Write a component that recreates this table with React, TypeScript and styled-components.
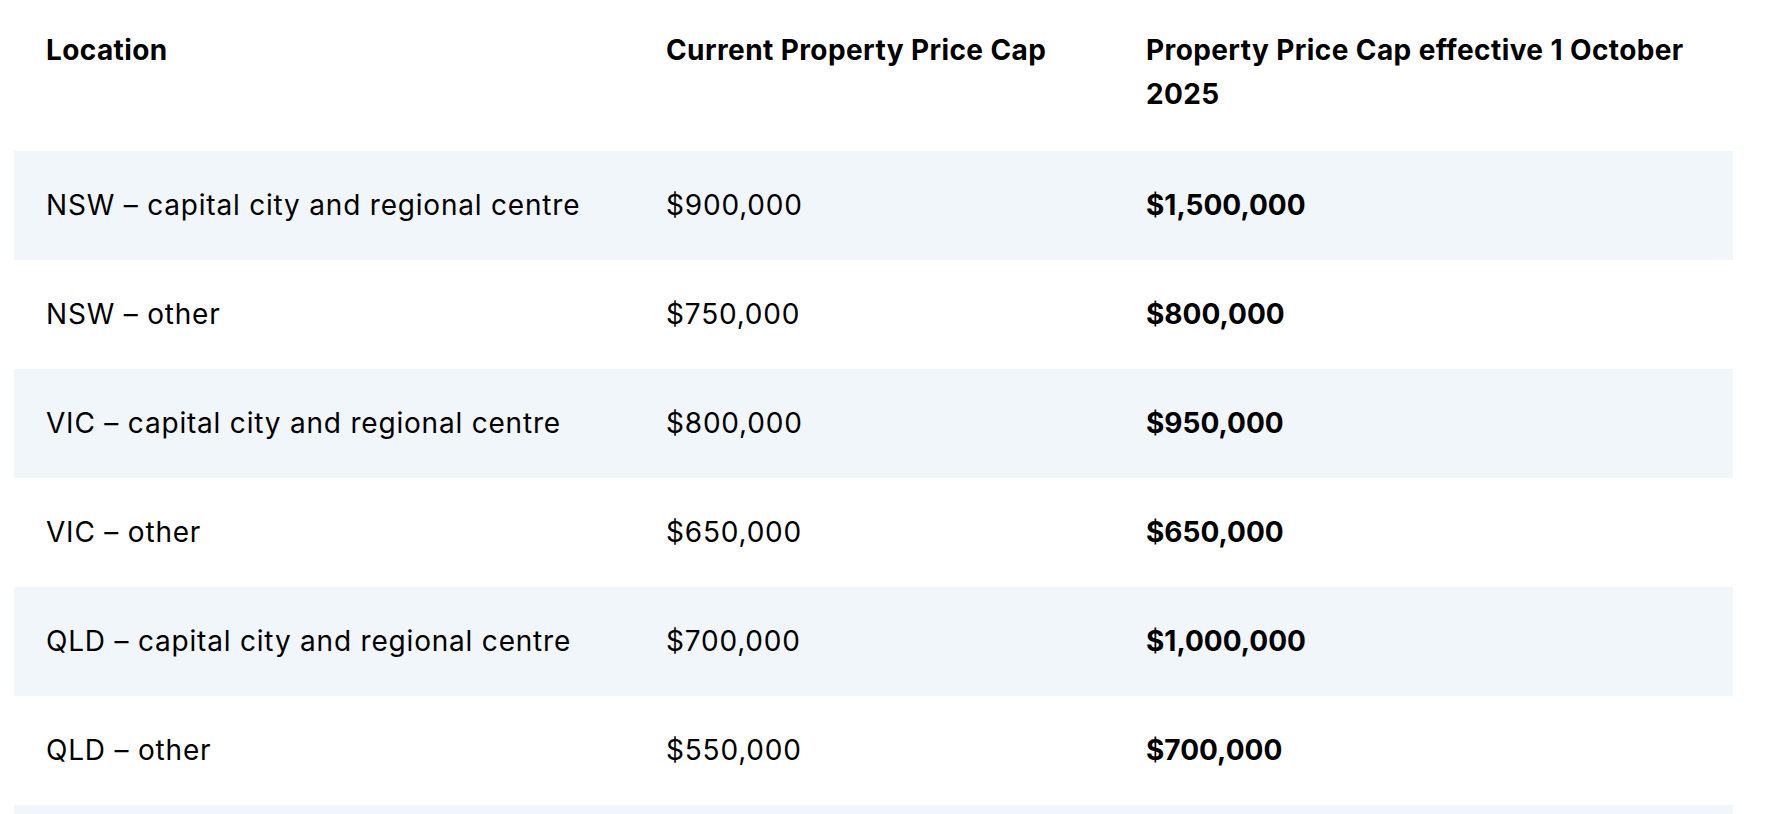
import React from "react";
import styled, { createGlobalStyle } from "styled-components";

const GlobalStyle = createGlobalStyle`
  html, body {
    margin: 0;
    padding: 0;
    background: #ffffff;
  }
  body {
    font-family: Inter, Lato, "Open Sans", Arial, sans-serif;
    color: #000;
  }
`;

const Page = styled.div`
  padding: 0 43px 0 14px;
  overflow: hidden;
  height: 814px;
`;

const Table = styled.table`
  width: 1719px;
  border-collapse: collapse;
  table-layout: fixed;
  font-size: 28px;
  line-height: 43.5px;
`;

const HeadCell = styled.th`
  text-align: left;
  font-weight: 700;
  letter-spacing: 0.4px;
  vertical-align: top;
  padding: 29px 32px 35px;
`;

const Row = styled.tr<{ $striped: boolean }>`
  background: ${(p) => (p.$striped ? "#f1f6fa" : "#ffffff")};
`;

const Cell = styled.td<{ $bold?: boolean }>`
  padding: 32.75px 32px;
  font-weight: ${(p) => (p.$bold ? 700 : 400)};
  letter-spacing: ${(p) => (p.$bold ? "0" : "0.8px")};
  vertical-align: middle;
`;

const rows = [
  { place: "NSW – capital city and regional centre", now: "$900,000", next: "$1,500,000" },
  { place: "NSW – other", now: "$750,000", next: "$800,000" },
  { place: "VIC – capital city and regional centre", now: "$800,000", next: "$950,000" },
  { place: "VIC – other", now: "$650,000", next: "$650,000" },
  { place: "QLD – capital city and regional centre", now: "$700,000", next: "$1,000,000" },
  { place: "QLD – other", now: "$550,000", next: "$700,000" },
  { place: "SA – capital city and regional centre", now: "$600,000", next: "$900,000" },
];

export default function App() {
  return (
    <Page>
      <GlobalStyle />
      <Table>
        <colgroup>
          <col style={{ width: 620 }} />
          <col style={{ width: 480 }} />
          <col style={{ width: 619 }} />
        </colgroup>
        <thead>
          <tr>
            <HeadCell>Location</HeadCell>
            <HeadCell>Current Property Price Cap</HeadCell>
            <HeadCell>Property Price Cap effective 1 October 2025</HeadCell>
          </tr>
        </thead>
        <tbody>
          {rows.map((r, i) => (
            <Row key={r.place} $striped={i % 2 === 0}>
              <Cell>{r.place}</Cell>
              <Cell>{r.now}</Cell>
              <Cell $bold>{r.next}</Cell>
            </Row>
          ))}
        </tbody>
      </Table>
    </Page>
  );
}
